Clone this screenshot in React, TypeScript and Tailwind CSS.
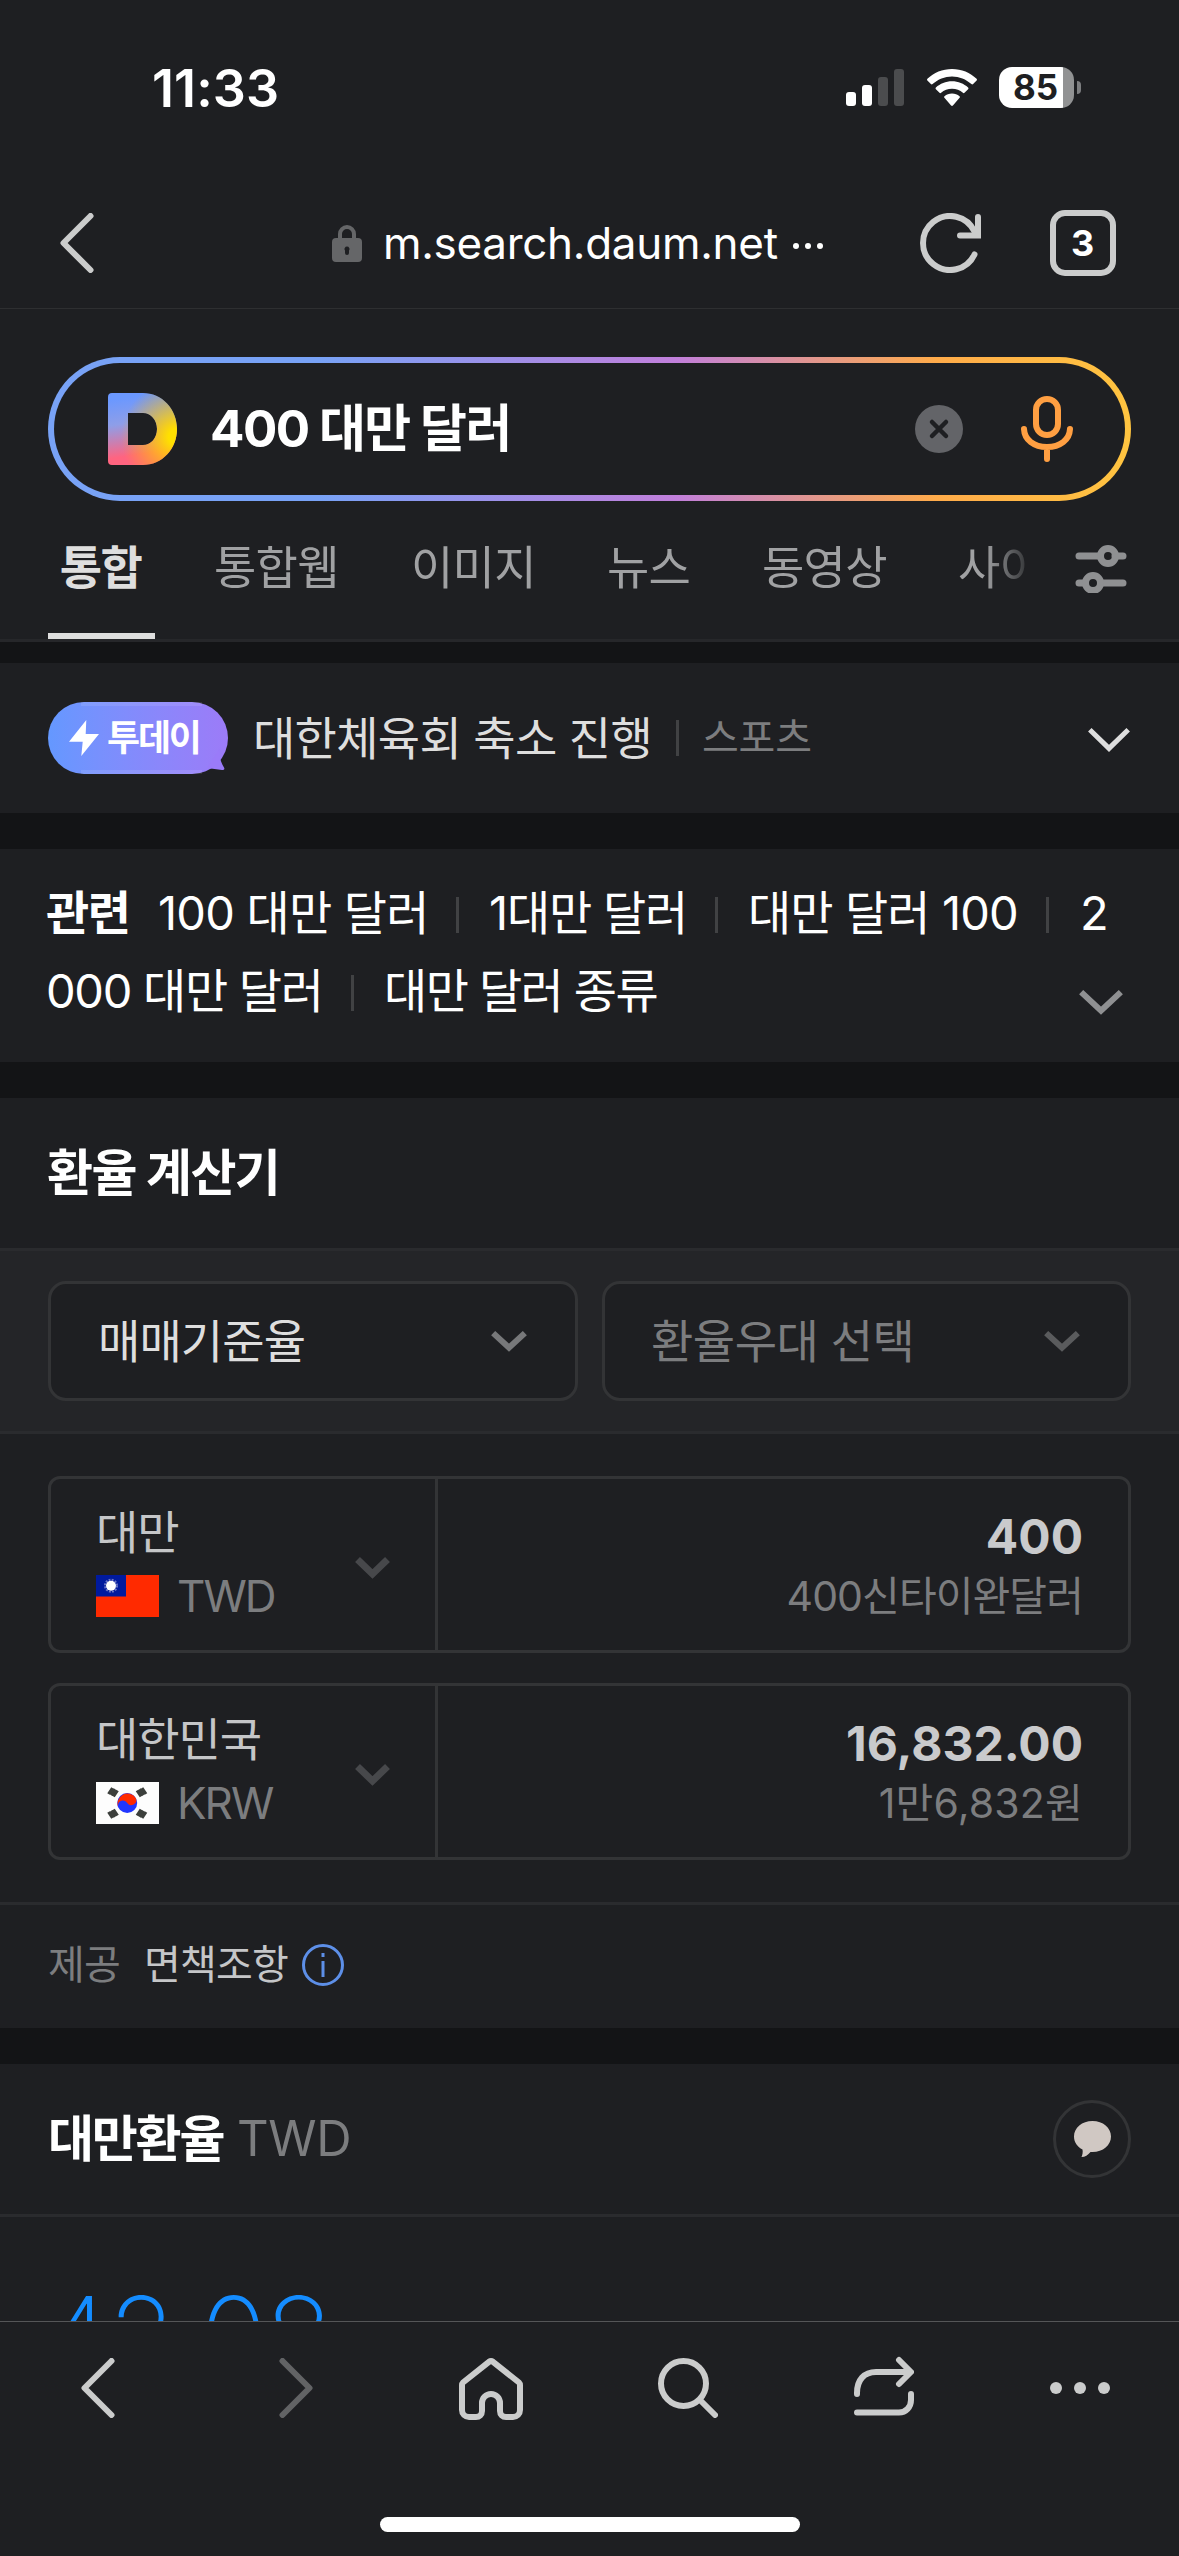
import React from "react";

const tabs = [
  { label: "통합웹", cls: "w-[197px]" },
  { label: "이미지", cls: "w-[196px]" },
  { label: "뉴스", cls: "w-[155px]" },
  { label: "동영상", cls: "w-[196px]" },
];

const currencies = [
  { country: "대만", code: "TWD", amount: "400", reading: "400신타이완달러", tracking: "tracking-[-0.9px]", Flag: TaiwanFlag },
  { country: "대한민국", code: "KRW", amount: "16,832.00", reading: "1만6,832원", tracking: "tracking-[0.2px]", Flag: KoreaFlag },
];

function TaiwanFlag() {
  return (
    <svg width="63" height="42" viewBox="0 0 63 42">
      <rect width="63" height="42" fill="#ff2a00" />
      <rect width="30" height="21.5" fill="#001a9e" />
      <circle cx="15" cy="10.7" r="6" fill="none" stroke="#6d78c6" strokeWidth="2" strokeDasharray="1.9 1.24" />
      <circle cx="15" cy="10.7" r="5" fill="#fff" />
    </svg>
  );
}

function KoreaFlag() {
  return (
    <svg width="63" height="42" viewBox="0 0 63 42">
      <rect width="63" height="42" fill="#fdfdfd" />
      <circle cx="31.2" cy="21" r="10" fill="#2136ff" />
      <path d="M22.6 26.2A10 10 0 0 1 39.9 16.2a5 5 0 0 1-8.7 4.8 5 5 0 0 0-8.6 5.2z" fill="#ff2a00" />
      <g stroke="#3c3f3c" strokeWidth="3">
        <path d="M12.5 12l4-6M15 13.2l4-6M17.5 14.5l4-6" />
        <path d="M50 12l-4-6M47.5 13.2l-4-6M45 14.5l-4-6" />
        <path d="M12.5 30l4 6M15 28.800l4 6M17.500 27.500l4 6" />
        <path d="M50 30l-4 6M47.500 28.800l-4 6M45 27.500l-4 6" />
      </g>
    </svg>
  );
}

function Chevron({ className, w = 36, h = 20, stroke = 5 }: { className?: string; w?: number; h?: number; stroke?: number }) {
  const p = stroke * 0.36;
  return (
    <svg width={w} height={h} viewBox={`0 0 ${w} ${h}`} className={className} fill="none" stroke="currentColor" strokeWidth={stroke}>
      <path d={`M${p} ${p}L${w / 2} ${h - stroke * 0.72}L${w - p} ${p}`} />
    </svg>
  );
}

function StatusBar() {
  return (
    <div className="flex h-[177px] items-start pl-[152px] pt-[67px]">
      <span className="w-[694px] pt-[1px] text-[52px] font-semibold leading-[42px] tracking-[0.1px] text-white">11:33</span>
      <svg width="58" height="37" viewBox="0 0 58 37" className="mt-[2px]">
        <rect y="23" width="10" height="14" rx="3" fill="#fff" />
        <rect x="16" y="16" width="10" height="21" rx="3" fill="#fff" />
        <rect x="32" y="8" width="10" height="29" rx="3" fill="#4b4c4e" />
        <rect x="48" width="10" height="37" rx="3" fill="#4b4c4e" />
      </svg>
      <svg width="50" height="37" viewBox="0 0 50 37" className="ml-[23px] mt-[2px]" fill="#fff">
        <path d="M25 0C34.5 0 43.3 3.7 49.6 9.8c.5.5.5 1.200 0 1.700l-3.500 3.600c-.5.5-1.200.5-1.700 0C39.1 10.2 32.3 7.4 25 7.4S10.9 10.2 5.6 15.1c-.5.5-1.200.5-1.700 0L.4 11.5c-.5-.5-.5-1.200 0-1.700C6.7 3.7 15.5 0 25 0z" />
        <path d="M25 12.3c6.2 0 11.9 2.4 16.1 6.2.5.5.5 1.200 0 1.700l-3.600 3.600c-.5.5-1.100.5-1.600 0-2.900-2.600-6.700-4.100-10.900-4.100s-8 1.500-10.900 4.100c-.5.5-1.100.5-1.600 0l-3.600-3.600c-.5-.5-.5-1.200 0-1.700 4.200-3.800 9.900-6.200 16.100-6.200z" />
        <path d="M25 24.5c2.900 0 5.5 1 7.5 2.7.5.4.5 1.100.1 1.600l-6.700 7.700c-.5.6-1.300.6-1.800 0l-6.700-7.700c-.4-.5-.4-1.200.1-1.600 2-1.700 4.600-2.700 7.500-2.700z" />
      </svg>
      <div className="ml-[22px] flex h-[41px] items-center">
        <div className="flex h-[41px] w-[75px] items-center overflow-hidden rounded-[13px] bg-linear-to-r from-white from-[85%] to-[#919293] to-[85%] pl-[14px]">
          <span className="text-[35px] font-bold leading-none text-[#1e1f22]">85</span>
        </div>
        <div className="ml-[3px] h-[13px] w-[4px] rounded-r-full bg-[#7d7e80]" />
      </div>
    </div>
  );
}

function AddressBar() {
  return (
    <div className="flex h-[132px] items-center border-b border-[#2e2f31] pl-[60px]">
      <svg width="34" height="60" viewBox="0 0 34 60" fill="none" stroke="#cbcccc" strokeWidth="6" strokeLinecap="round" strokeLinejoin="round">
        <path d="M30.500 3L3.500 30l27 27" />
      </svg>
      <svg width="30" height="38" viewBox="0 0 30 38" className="ml-[238px]">
        <path d="M8 16V10a7 7 0 0 1 14 0v6" fill="none" stroke="#656668" strokeWidth="4" />
        <path d="M4 14h22a4 4 0 0 1 4 4v16a4 4 0 0 1-4 4H4a4 4 0 0 1-4-4V18a4 4 0 0 1 4-4zm11 8.500a2.500 2.500 0 0 0-2 4V29a2 2 0 0 0 4 0v-2.500a2.500 2.500 0 0 0-2-4z" fill="#656668" />
      </svg>
      <span className="ml-[21px] w-[409px] whitespace-nowrap text-[44px] leading-[60px] tracking-[-0.3px] text-white">m.search.daum.net</span>
      <svg width="32" height="8" viewBox="0 0 32 8" fill="#fff" className="mt-[6px]">
        <circle cx="4" cy="4" r="3" />
        <circle cx="16" cy="4" r="3" />
        <circle cx="28" cy="4" r="3" />
      </svg>
      <svg width="62" height="60" viewBox="0 0 62 60" className="ml-[96px]" fill="none" stroke="#cbcccc" strokeWidth="6" strokeLinecap="round">
        <path d="M54.5 41.4A27 27 0 1 1 54.5 18.6L56 22" strokeLinejoin="round" />
        <path d="M58 4v18.5H40" strokeLinejoin="miter" />
      </svg>
      <div className="ml-[68px] flex h-[66px] w-[66px] items-center justify-center rounded-[15px] border-[6px] border-[#cbcccc]">
        <span className="pr-[1px] text-[36px] font-bold leading-none text-white">3</span>
      </div>
    </div>
  );
}

function SearchBox() {
  return (
    <div className="px-12 pt-12">
      <div className="h-[144px] rounded-full bg-[linear-gradient(90deg,#78a2f6_25%,#c17fdb_58%,#ffab4a_82%,#ffc440_100%)] p-[6px]">
        <div className="flex h-full items-center rounded-full bg-[#1e1f22] pl-[54px]">
          <svg width="69" height="72" viewBox="0 0 69 72">
            <defs>
              <linearGradient id="dBase" x1="0" y1="0" x2="0.15" y2="1">
                <stop offset="0.1" stopColor="#6b98ff" />
                <stop offset="0.45" stopColor="#8e9ee8" />
                <stop offset="0.9" stopColor="#ff6480" />
              </linearGradient>
              <radialGradient id="dGlow" gradientUnits="userSpaceOnUse" cx="69" cy="44" r="56">
                <stop offset="0.15" stopColor="#ffe000" />
                <stop offset="1" stopColor="#ffb000" stopOpacity="0" />
              </radialGradient>
            </defs>
            <path fillRule="evenodd" fill="url(#dBase)" d="M4 0H35C54 0 69 16 69 36S54 72 35 72H4a4 4 0 0 1-4-4V4a4 4 0 0 1 4-4zM20 20V52H35C43 52 49 45 49 36S43 20 35 20z" />
            <path fillRule="evenodd" fill="url(#dGlow)" d="M4 0H35C54 0 69 16 69 36S54 72 35 72H4a4 4 0 0 1-4-4V4a4 4 0 0 1 4-4zM20 20V52H35C43 52 49 45 49 36S43 20 35 20z" />
          </svg>
          <span className="ml-[33px] w-[705px] text-[51px] font-bold leading-[60px] tracking-[-1.6px] text-white">400 대만 달러</span>
          <svg width="48" height="48" viewBox="0 0 48 48">
            <circle cx="24" cy="24" r="24" fill="#636468" />
            <path d="M17 17l14 14M31 17L17 31" stroke="#1e1f22" strokeWidth="4.5" strokeLinecap="round" />
          </svg>
          <svg width="52" height="66" viewBox="0 0 52 66" className="ml-[58px]" fill="none" stroke="#ff9f42" strokeWidth="6" strokeLinecap="round">
            <rect x="15" y="3" width="22" height="36" rx="11" />
            <path d="M3 33C3.500 44 13 51 26 51s22.500-7 23-18M26 51v12" />
          </svg>
        </div>
      </div>
    </div>
  );
}

function Tabs() {
  return (
    <div className="flex h-[141px] border-b-[3px] border-[#26272a] pl-12">
      <div className="flex w-[107px] justify-center border-b-[6px] border-[#dedede] pr-[2px] pt-[36px] text-[46px] font-bold leading-[60px] tracking-[-1.5px] text-[#dedede]">통합</div>
      <div className="flex w-[873px] overflow-hidden whitespace-nowrap mask-r-from-[95%] mask-r-to-[101%] pl-[59px] pt-[36px] text-[46px] leading-[60px] tracking-[-0.7px] text-[#a0a1a3]">
        {tabs.map((tab) => (
          <span key={tab.label} className={`shrink-0 ${tab.cls}`}>
            {tab.label}
          </span>
        ))}
        <span>사이트</span>
      </div>
      <svg width="52" height="48" viewBox="0 0 52 48" className="ml-[47px] mt-[44px]" fill="none" stroke="#8f9092" strokeWidth="7" strokeLinecap="round">
        <path d="M4 11h21M40 11h8M4 38h6M26 38h22" />
        <circle cx="33" cy="11" r="7.5" />
        <circle cx="18" cy="38" r="7.5" />
      </svg>
    </div>
  );
}

function TodayBar() {
  return (
    <div className="flex h-[150px] items-center bg-[#1e1f22] pl-12">
      <div className="relative flex h-[72px] w-[180px] items-center rounded-full bg-linear-to-r from-[#6498ff] to-[#9c7bf8] pl-[21px]">
        <span className="absolute left-[33px] top-0 h-1 w-[121px] bg-white/10" />
        <span className="absolute bottom-0 left-[33px] h-1 w-[121px] bg-white/10" />
        <svg width="22" height="24" viewBox="0 0 22 24" className="absolute bottom-[4px] right-[3px]">
          <path d="M17 2C16 9 17 15 21 21.500 22 23.500 21 24 19 24L4 22z" fill="#9a7bf9" />
        </svg>
        <svg width="30" height="36" viewBox="0 0 30 36" className="relative" fill="#fff">
          <path d="M17.300 0L0 21.700h13.700L12.300 36 30 14H16.700z" />
        </svg>
        <span className="relative -mt-[1px] ml-[8px] whitespace-nowrap text-[36px] font-bold leading-[60px] tracking-[-2.2px] text-white">투데이</span>
      </div>
      <span className="-mt-[1px] ml-[25px] w-[423px] whitespace-nowrap text-[46px] leading-[60px] tracking-[-0.7px] text-[#dedede]">대한체육회 축소 진행</span>
      <div className="h-9 w-[3px] bg-[#414244]" />
      <span className="-mt-[1px] ml-[23px] w-[386px] text-[40px] leading-[60px] tracking-[-0.2px] text-[#7c7d7f]">스포츠</span>
      <Chevron w={42} h={24} stroke={5} className="mt-[3px] text-[#dedede]" />
    </div>
  );
}

function Bar() {
  return <span className="mt-[3px] h-9 w-[3px] shrink-0 bg-[#414244]" />;
}

function Related() {
  return (
    <div className="mt-9 flex h-[213px] flex-col bg-[#1e1f22] pl-[46px] pt-[25px] text-[47px] leading-[78px] tracking-[-1.5px] text-white">
      <div className="flex items-center whitespace-nowrap">
        <b className="w-[112px]">관련</b>
        <span className="w-[298px] tracking-[-0.8px]">100 대만 달러</span>
        <Bar />
        <span className="ml-[30px] w-[226px] tracking-[-1.2px]">1대만 달러</span>
        <Bar />
        <span className="ml-[30px] w-[298px] tracking-[-0.9px]">대만 달러 100</span>
        <Bar />
        <span className="ml-[31px]">2</span>
      </div>
      <div className="flex items-center whitespace-nowrap">
        <span className="w-[305px] tracking-[-1.3px]">000 대만 달러</span>
        <Bar />
        <span className="ml-[30px] w-[695px] tracking-[-1.6px]">대만 달러 종류</span>
        <Chevron w={44} h={25} stroke={6} className="mt-[22px] text-[#8f9092]" />
      </div>
    </div>
  );
}

function Calculator() {
  return (
    <section className="mt-9 bg-[#1e1f22]">
      <h2 className="flex h-[150px] items-center pb-[1px] pl-[47px] text-[50px] font-bold leading-none tracking-[-1.6px] text-white">환율 계산기</h2>
      <div className="flex h-[186px] items-center gap-6 border-y-[3px] border-[#2a2b2e] bg-[#242528] px-12 text-[46px] leading-[60px]">
        <div className="flex h-[120px] w-[530px] items-center justify-between rounded-[18px] border-[3px] border-[#333436] bg-[#1e1f22] pl-[47px] pr-[48px] tracking-[-0.9px] text-[#dedede]">
          매매기준율
          <Chevron h={21} stroke={6} className="text-[#77787a]" />
        </div>
        <div className="flex h-[120px] flex-1 items-center justify-between rounded-[18px] border-[3px] border-[#333436] bg-[#1e1f22] pl-[46px] pr-[48px] tracking-[-0.5px] text-[#7c7d7f]">
          환율우대 선택
          <Chevron h={21} stroke={6} className="text-[#5a5b5d]" />
        </div>
      </div>
      <div className="flex flex-col gap-[30px] px-12 py-[42px]">
        {currencies.map(({ country, code, amount, reading, tracking, Flag }) => (
          <div key={code} className="flex h-[177px] rounded-[12px] border-[3px] border-[#333436]">
            <div className="flex w-[387px] items-center justify-between border-r-[3px] border-[#333436] pl-[45px] pr-[45px]">
              <div>
                <div className="-mt-[2px] mb-[2px] text-[46px] leading-[62px] tracking-[-1.1px] text-[#c5c6c8]">{country}</div>
                <div className="flex items-center gap-[18px]">
                  <Flag />
                  <span className="text-[44px] leading-[62px] tracking-[-2px] text-[#7c7d7f]">{code}</span>
                </div>
              </div>
              <Chevron w={35} h={22} stroke={7} className="mt-[6px] text-[#47484b]" />
            </div>
            <div className="flex flex-1 flex-col items-end justify-center pr-[45px]">
              <span className="mt-[1px] text-[48px] font-bold leading-[62px] text-[#c9cacc]">{amount}</span>
              <span className={`text-[41px] leading-[56px] text-[#7c7d7f] ${tracking}`}>{reading}</span>
            </div>
          </div>
        ))}
      </div>
      <div className="flex h-[126px] items-center border-t-[3px] border-[#2a2b2e] pb-[3px] pl-12 text-[40px] leading-[60px] tracking-[-0.8px]">
        <span className="w-[96px] text-[#7c7d7f]">제공</span>
        <span className="w-[158px] whitespace-nowrap text-[#c5c6c8]">면책조항</span>
        <svg width="42" height="42" viewBox="0 0 42 42" fill="none" stroke="#5d8fe8" strokeWidth="3">
          <circle cx="21" cy="21" r="19.5" />
          <path d="M21 17v16M21 9v4" />
        </svg>
      </div>
    </section>
  );
}

function RateSection() {
  return (
    <section className="mt-9 h-[257px] overflow-hidden bg-[#1e1f22]">
      <div className="flex h-[153px] items-center border-b-[3px] border-[#2a2b2e] pl-12 pr-12">
        <h2 className="w-[189px] whitespace-nowrap text-[50px] font-bold leading-[60px] tracking-[-2.2px] text-white">대만환율</h2>
        <span className="flex-1 text-[49px] leading-[60px] tracking-[-0.3px] text-[#7c7d7f]">TWD</span>
        <div className="flex h-[78px] w-[78px] items-center justify-center rounded-full border-[3px] border-[#333436]">
          <svg width="37" height="36" viewBox="0 0 37 36" fill="#d0c8c3">
            <path d="M18.500 0C29 0 37 6.800 37 15.500S29 31 18.500 31h-2C14 34 11 36 7.500 36 8.500 34 9 31 8.500 28.500 3.500 26 0 21.500 0 15.500 0 6.800 8 0 18.500 0z" />
          </svg>
        </div>
      </div>
      <div className="pl-[42px] pt-[60px] text-[111px] font-extralight leading-[120px] tracking-[-2px] text-[#148cff]">42.08</div>
    </section>
  );
}

function BottomNav() {
  return (
    <div className="flex h-[235px] flex-col border-t border-[#555658] bg-[#1e1f22]">
      <div className="flex h-[132px] items-center pl-[81px]">
        <svg width="34" height="60" viewBox="0 0 34 60" fill="none" stroke="#cbcccc" strokeWidth="6" strokeLinecap="round" strokeLinejoin="round">
          <path d="M30.500 3L3.500 30l27 27" />
        </svg>
        <svg width="34" height="60" viewBox="0 0 34 60" className="ml-[164px]" fill="none" stroke="#626365" strokeWidth="6" strokeLinecap="round" strokeLinejoin="round">
          <path d="M3.500 3l27 27-27 27" />
        </svg>
        <svg width="64" height="62" viewBox="0 0 64 62" className="ml-[146px] mt-[2px]" fill="none" stroke="#cbcccc" strokeWidth="6" strokeLinejoin="round">
          <path d="M34 3.800a3.500 3.500 0 0 0-4 0L4 24.500Q3 25.500 3 27v25c0 4 3 7 7 7h7c3.500 0 6-2.500 6-6V45a9 9 0 0 1 18 0v8c0 3.500 2.500 6 6 6h7c4 0 7-3 7-7V27q0-1.500-1-2.500z" />
        </svg>
        <svg width="60" height="60" viewBox="0 0 60 60" className="ml-[135px]" fill="none" stroke="#cbcccc" strokeWidth="6" strokeLinecap="round">
          <circle cx="25.500" cy="25.500" r="22.500" />
          <path d="M42 42l15 15" />
        </svg>
        <svg width="60" height="62" viewBox="0 0 60 62" className="-mt-[2px] ml-[136px]" fill="none" stroke="#cbcccc" strokeWidth="6" strokeLinecap="round" strokeLinejoin="round">
          <path d="M3 38V37C3 24 10 16 22 16H56M45 4L57 16 45 28" />
          <path d="M57 38v6c0 7-5 12.500-12 12.500H3" />
        </svg>
        <svg width="60" height="12" viewBox="0 0 60 12" className="ml-[136px]" fill="#cbcccc">
          <circle cx="6" cy="6" r="6" />
          <circle cx="30" cy="6" r="6" />
          <circle cx="54" cy="6" r="6" />
        </svg>
      </div>
      <div className="mx-auto mt-[63px] h-[15px] w-[420px] rounded-full bg-white" />
    </div>
  );
}

export default function App() {
  return (
    <div className="flex h-[2556px] w-[1179px] flex-col overflow-hidden bg-[#131416] font-['Inter','Noto_Sans_CJK_KR',sans-serif]">
      <header className="mb-[21px] bg-[#1e1f22]">
        <StatusBar />
        <AddressBar />
        <SearchBox />
        <Tabs />
      </header>
      <TodayBar />
      <Related />
      <Calculator />
      <RateSection />
      <BottomNav />
    </div>
  );
}
